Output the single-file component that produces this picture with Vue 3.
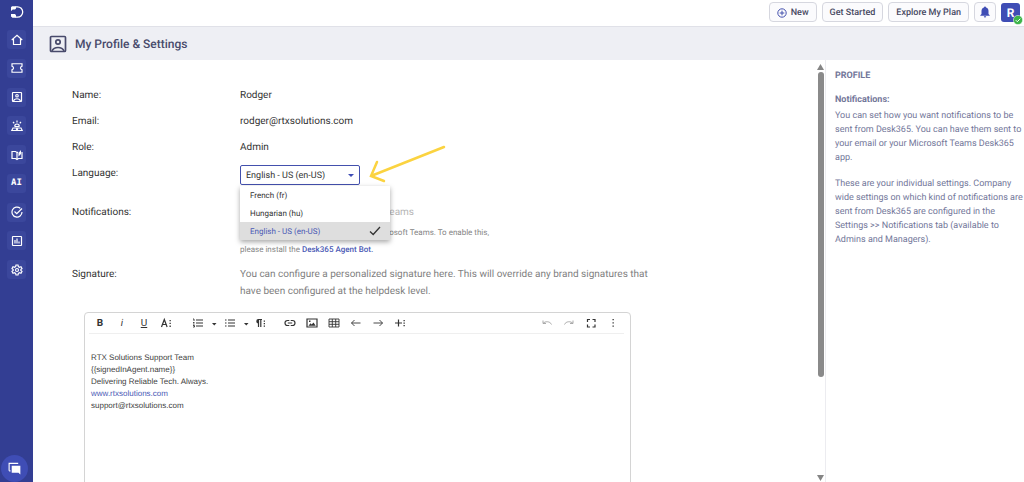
<script setup>
import { ref } from 'vue'

const languages = ['French (fr)', 'Hungarian (hu)', 'English - US (en-US)']
const language = ref('English - US (en-US)')

const navItems = ['Home', 'Tickets', 'Contacts', 'Dashboard', 'Knowledge base', 'AI', 'Tasks', 'Reports', 'Settings']
const details = [
  { label: 'Name:', value: 'Rodger' },
  { label: 'Email:', value: 'rodger@rtxsolutions.com' },
  { label: 'Role:', value: 'Admin' },
]
</script>

<template>
  <div class="app">
    <nav class="sidebar" aria-label="Main">
      <svg class="logo" viewBox="0 0 14 14" aria-hidden="true">
        <path d="M5.500 1.800h2a5.200 5.200 0 0 1 0 10.400h-2" fill="none" stroke="#fff" stroke-width="1.300" />
        <path d="M2 1.200h4v2.300L5 4.600H2.800L1 6V2.200zM1 9h4l1 1.200v2.600H2.500L1 11.500z" fill="#fff" />
      </svg>
      <div class="nav-list">
        <button v-for="item in navItems" :key="item" class="nav-item" type="button" :aria-label="item">
          <span v-if="item === 'AI'" class="ai">AI</span>
          <svg v-else viewBox="0 0 24 24" fill="none" stroke="#fff" stroke-width="2.400">
            <path v-if="item === 'Home'" d="M1.500 12 12 2.500l10.500 9.500M5 10v11h14V10" />
            <path v-if="item === 'Tickets'" d="M2 3.500h20v5c-4 1-4 6 0 7v5H2v-5c4-1 4-6 0-7z" />
            <g v-if="item === 'Contacts'">
              <rect x="3" y="3" width="18" height="18" rx="1" />
              <circle cx="12" cy="9.500" r="2.500" />
              <path d="M5 20c2-6 12-6 14 0" />
            </g>
            <g v-if="item === 'Dashboard'">
              <path d="M12 1v4M4 4l2.500 2.500M20 4l-2.500 2.500M7.500 12.500a4.500 4.500 0 0 1 9 0" />
              <path d="M7 13h10M4 16h7v5H1.500zM20 16h-7v5h9.500z" />
            </g>
            <g v-if="item === 'Knowledge base'">
              <path d="M12 20V7L9 5H2v14h7l3 2 3-2h7V6M12 8l2-2" />
              <path d="M15 15V8l5-6v8z" fill="#fff" stroke="none" />
            </g>
            <path v-if="item === 'Tasks'" d="M18.500 4.500A10 10 0 1 0 22 12M7 11l4.500 4.500L22 5" />
            <g v-if="item === 'Reports'">
              <rect x="3" y="3" width="18" height="18" rx="1" />
              <path d="M8 10v7M12 7v10M16 13v4" />
            </g>
            <g v-if="item === 'Settings'">
              <path d="M10 2h4l.7 3.200 2.300 1.300 3-1 2 3.500-2.300 2v2l2.300 2-2 3.500-3-1-2.300 1.300L14 22h-4l-.7-3.200L7 17.500l-3 1L2 15l2.300-2v-2L2 9l2-3.500 3 1 2.300-1.300z" />
              <circle cx="12" cy="12" r="3" />
            </g>
          </svg>
        </button>
      </div>
      <button class="chat" type="button" aria-label="Chat">
        <svg viewBox="0 0 14 14" aria-hidden="true">
          <path d="M1.200 9.500v-8h9.800" fill="none" stroke="#fff" stroke-width="1.200" />
          <path d="M1.200 9.500h1.500" stroke="#fff" stroke-width="1.200" />
          <path d="M4 4h9.300v9.500l-2-2H4z" fill="#fff" />
        </svg>
      </button>
    </nav>

    <div class="body">
      <header class="topbar">
        <button class="btn" type="button">
          <svg class="plus" viewBox="0 0 10 10" fill="none" stroke="#4350ad" aria-hidden="true">
            <circle cx="5" cy="5" r="4.200" />
            <path d="M5 2.700v4.600M2.700 5h4.600" />
          </svg>
          New
        </button>
        <button class="btn" type="button">Get Started</button>
        <button class="btn" type="button">Explore My Plan</button>
        <button class="btn bell" type="button" aria-label="Alerts">
          <svg viewBox="0 0 10 12" fill="#3f4db5" aria-hidden="true">
            <path d="M5 .5a1 1 0 0 1 1 1C8 2 8.500 3.500 8.500 5v3L9.700 9.300v.5H.3v-.5L1.500 8V5C1.500 3.500 2 2 4 1.500a1 1 0 0 1 1-1zM3.800 10.300h2.400a1.200 1.200 0 0 1-2.400 0z" />
          </svg>
        </button>
        <button class="avatar" type="button">
          R
          <svg class="status" viewBox="0 0 10 10" aria-hidden="true">
            <circle cx="5" cy="5" r="4.600" fill="#3db54a" stroke="#fff" stroke-width=".5" />
            <path d="M2.800 5.200l1.500 1.500 3-3" fill="none" stroke="#fff" />
          </svg>
        </button>
      </header>

      <div class="heading">
        <svg viewBox="0 0 18 18" fill="none" stroke="#484a6b" stroke-width="1.700" aria-hidden="true">
          <rect x="1.500" y="1.500" width="15" height="15" rx="1" />
          <circle cx="9" cy="7" r="2.200" />
          <path d="M3 16c2-4.700 10-4.700 12 0" />
        </svg>
        <h1>My Profile &amp; Settings</h1>
      </div>

      <div class="content">
        <main class="main">
          <dl class="details">
            <div v-for="row in details" :key="row.label" class="row">
              <dt>{{ row.label }}</dt>
              <dd>{{ row.value }}</dd>
            </div>
          </dl>
          <div class="row language-row">
            <label for="language">Language:</label>
            <div class="picker">
              <select id="language" v-model="language">
                <option v-for="name in languages" :key="name">{{ name }}</option>
              </select>
              <svg class="caret" viewBox="0 0 6 3" aria-hidden="true"><path d="M0 0h6L3 3z" fill="#3f4db5" /></svg>
              <div class="menu" role="listbox" aria-label="Language">
                <button
                  v-for="name in languages"
                  :key="name"
                  type="button"
                  role="option"
                  class="option"
                  :class="{ selected: name === language }"
                  :aria-selected="name === language"
                  @click="language = name"
                >
                  {{ name }}
                  <svg v-if="name === language" viewBox="0 0 12 10" aria-hidden="true">
                    <path d="M1 5.500l3.200 3L11 1" fill="none" stroke="#333" stroke-width="1.300" />
                  </svg>
                </button>
              </div>
              <svg class="pointer" viewBox="0 0 80 40" fill="none" stroke="#fbd340" stroke-width="2.500" stroke-linecap="round" aria-hidden="true">
                <path d="M76 3 3 32M9 18 3 32l13 5" />
              </svg>
            </div>
          </div>
          <div class="row notifications">
            <div>Notifications:</div>
            <div class="notify">
              <p class="channel">Teams</p>
              <p class="hint">
                <span class="hint-line">osoft Teams. To enable this,</span>
                please install the <a href="#">Desk365 Agent Bot.</a>
              </p>
            </div>
          </div>
          <div class="row signature">
            <div>Signature:</div>
            <p>You can configure a personalized signature here. This will override any brand signatures that have been configured at the helpdesk level.</p>
          </div>

          <section class="editor" aria-label="Signature editor">
            <div class="toolbar">
              <button type="button" class="tool strong">B</button>
              <button type="button" class="tool italic">i</button>
              <button type="button" class="tool under">U</button>
              <button type="button" class="tool last" aria-label="More text">
                <svg viewBox="0 0 12 12"><path d="M1.500 10 4.300 2.500 7.100 10M2.500 7.500h3.600" /><path class="dots" d="M9.500 3h1.300v1.300H9.500zM9.500 5.800h1.300v1.300H9.500zM9.500 8.600h1.300v1.300H9.500z" /></svg>
              </button>
              <button type="button" class="tool narrow" aria-label="Ordered list">
                <svg viewBox="0 0 12 12"><path d="M4 3h7M4 6h7M4 9h7" /><path class="thin" d="M1 2h1v2M1 5.500h1.500M1 7h1.500M1 8.500h1.500v1.500H1" /></svg>
              </button>
              <button type="button" class="tool arrow" aria-label="Ordered list style"><svg viewBox="0 0 12 12"><path class="dots" d="M4 6h4.500L6.250 8.500z" /></svg></button>
              <button type="button" class="tool narrow" aria-label="Bullet list">
                <svg viewBox="0 0 12 12"><path d="M4 3h7M4 6h7M4 9h7M1 3h1.500M1 6h1.500M1 9h1.500" /></svg>
              </button>
              <button type="button" class="tool arrow" aria-label="Bullet list style"><svg viewBox="0 0 12 12"><path class="dots" d="M4 6h4.500L6.250 8.500z" /></svg></button>
              <button type="button" class="tool last para" aria-label="Paragraph">
                <svg viewBox="0 0 12 12"><path d="M4.500 10V2.500H8M6.800 10V2.500" /><path class="dots" d="M4.500 2a2.200 2.200 0 0 0 0 4.500zM9.700 3.500H11v1.300H9.700zM9.700 6H11v1.300H9.700zM9.700 8.500H11v1.300H9.700z" /></svg>
              </button>
              <button type="button" class="tool" aria-label="Link">
                <svg viewBox="0 0 12 12"><path d="M5.300 3.500H3.500a2.500 2.500 0 0 0 0 5h1.800M6.700 3.500h1.800a2.500 2.500 0 0 1 0 5H6.700M3.800 6h4.400" /></svg>
              </button>
              <button type="button" class="tool" aria-label="Image">
                <svg viewBox="0 0 12 12"><path d="M1 2h10v8H1z" /><path class="dots" d="M2.500 8.800l2-2.500 1.200 1.300L7.500 5.500l2.200 3.300zM3 3.500h1.500V5H3z" /></svg>
              </button>
              <button type="button" class="tool" aria-label="Table">
                <svg viewBox="0 0 12 12"><path class="thin" d="M1 2h10v8H1zM1 4.700h10M1 7.300h10M4.300 2v8M7.700 2v8" /></svg>
              </button>
              <button type="button" class="tool" aria-label="Outdent"><svg viewBox="0 0 12 12"><path class="thin" d="M10.500 6h-9M4.500 3l-3 3 3 3" /></svg></button>
              <button type="button" class="tool" aria-label="Indent"><svg viewBox="0 0 12 12"><path class="thin" d="M1.500 6h9M7.500 3l3 3-3 3" /></svg></button>
              <button type="button" class="tool" aria-label="Insert more">
                <svg viewBox="0 0 12 12"><path d="M1 6h7M4.500 2.500v7" /><path class="dots" d="M9.500 3h1.300v1.300H9.500zM9.500 5.500h1.300v1.300H9.500zM9.500 8h1.300v1.300H9.500z" /></svg>
              </button>
              <span class="spacer"></span>
              <button type="button" class="tool" disabled aria-label="Undo"><svg viewBox="0 0 12 12"><path class="thin" d="M2 3.500v3h3M2 6.500C4 4 9 4 10.500 7.500" /></svg></button>
              <button type="button" class="tool" disabled aria-label="Redo"><svg viewBox="0 0 12 12"><path class="thin" d="M10 3.500v3H7M10 6.500C8 4 3 4 1.500 7.500" /></svg></button>
              <button type="button" class="tool" aria-label="Full screen"><svg viewBox="0 0 12 12"><path d="M2.500 5V2.500H5M7.500 2.500H10V5M10 7.500V10H7.500M5 10H2.500V7.500" /></svg></button>
              <button type="button" class="tool" aria-label="More"><svg viewBox="0 0 12 12"><path class="dots" d="M5.500 2h1.300v1.300H5.500zM5.500 5.200h1.300v1.300H5.500zM5.500 8.400h1.300v1.300H5.500z" /></svg></button>
            </div>
            <div class="document" contenteditable="true">
              <div>RTX Solutions Support Team</div>
              <div v-pre>{{signedInAgent.name}}</div>
              <div>Delivering Reliable Tech. Always.</div>
              <div><a href="#">www.rtxsolutions.com</a></div>
              <div>support@rtxsolutions.com</div>
            </div>
          </section>
        </main>

        <div class="scrollbar" aria-hidden="true">
          <svg viewBox="0 0 7 6"><path d="M3.500 0 7 6H0z" /></svg>
          <div class="track"><div class="thumb"></div></div>
          <svg viewBox="0 0 7 6"><path d="M0 0h7L3.500 6z" /></svg>
        </div>

        <aside class="help">
          <h2>PROFILE</h2>
          <h3>Notifications:</h3>
          <p>You can set how you want notifications to be sent from Desk365. You can have them sent to your email or your Microsoft Teams Desk365 app.</p>
          <p>These are your individual settings. Company wide settings on which kind of notifications are sent from Desk365 are configured in the Settings &gt;&gt; Notifications tab (available to Admins and Managers).</p>
        </aside>
      </div>
    </div>
  </div>
</template>

<style>
body {
  margin: 0;
  background: #fff;
}
</style>

<style scoped>
* {
  box-sizing: border-box;
}
button,
select {
  font-family: inherit;
  text-rendering: inherit;
  margin: 0;
  padding: 0;
  border: 0;
  background: none;
}
h1, h2, h3, p, dl, dd {
  margin: 0;
}
svg {
  display: block;
}
a {
  color: #4a59b5;
  text-decoration: none;
}
.app {
  display: flex;
  height: 100vh;
  overflow: hidden;
  font-family: Roboto, sans-serif;
  font-size: 10px;
  text-rendering: geometricPrecision;
  color: #333;
}
.sidebar {
  flex: none;
  display: flex;
  flex-direction: column;
  align-items: center;
  width: 33px;
  padding-top: 5px;
  background: #333e93;
}
.logo {
  width: 14px;
  height: 14px;
}
.nav-list {
  display: flex;
  flex-direction: column;
  justify-content: space-between;
  height: 249px;
  margin-top: 11px;
}
.nav-item {
  display: flex;
  align-items: center;
  justify-content: center;
  width: 19px;
  height: 19px;
  border-radius: 3px;
  background: #3b479c;
}
.nav-item svg {
  width: 12px;
  height: 12px;
}
.ai {
  font: bold 9px "DejaVu Sans Mono", monospace;
  color: #fff;
}
.chat {
  display: flex;
  align-items: center;
  justify-content: center;
  width: 27px;
  height: 27px;
  margin: auto 4px 0 0;
  border-radius: 50%;
  background: #3f4db5;
}
.chat svg {
  width: 13px;
  height: 13px;
}
.body {
  flex: 1;
  display: flex;
  flex-direction: column;
  min-width: 0;
}
.topbar {
  flex: none;
  display: flex;
  justify-content: flex-end;
  gap: 5px;
  height: 26px;
  padding: 2px 4px 0 0;
}
.btn {
  display: flex;
  align-items: center;
  gap: 4px;
  height: 20px;
  padding: 1px 7px 0;
  border: 1px solid #d6d7df;
  border-radius: 4px;
  background: #fbfbfd;
  font-size: 9px;
  font-weight: 500;
  color: #484a63;
}
.plus {
  width: 10px;
  height: 10px;
}
.bell {
  padding: 0 5px;
}
.bell svg {
  width: 10px;
  height: 12px;
}
.avatar {
  position: relative;
  width: 19px;
  height: 19px;
  margin-top: 1px;
  border-radius: 3px;
  background: #3f4db5;
  font-size: 12px;
  font-weight: 700;
  color: #fff;
}
.status {
  position: absolute;
  right: -3px;
  bottom: -3px;
  width: 10px;
  height: 10px;
}
.heading {
  flex: none;
  display: flex;
  align-items: center;
  gap: 8px;
  height: 34px;
  padding-left: 16px;
  border-top: 1px solid #e0e1e8;
  background: #eeeff4;
}
.heading svg {
  width: 18px;
  height: 18px;
}
.heading h1 {
  font-size: 12px;
  font-weight: 500;
  color: #484a6b;
}
.content {
  flex: 1;
  display: flex;
  min-height: 0;
}
.main {
  flex: 1;
  display: flex;
  flex-direction: column;
  min-width: 0;
  padding: 23px 0 0 39px;
}
.row {
  flex: none;
  display: grid;
  grid-template-columns: 168px 1fr;
  min-height: 26px;
  line-height: 26px;
}
.language-row {
  min-height: 39px;
}
.picker {
  position: relative;
  width: 120px;
  height: 20px;
  margin-top: 4px;
}
.picker select {
  display: block;
  width: 100%;
  height: 20px;
  padding: 1px 5px 0;
  appearance: none;
  border: 1px solid #4350ad;
  border-radius: 2px;
  background: #fff;
  font-size: 9px;
  color: #333;
}
.caret {
  position: absolute;
  top: 9px;
  right: 6px;
  width: 6px;
  height: 3px;
}
.menu {
  position: absolute;
  z-index: 2;
  top: 21px;
  left: 0;
  width: 150px;
  background: #fff;
  box-shadow: 0 2px 5px rgba(0, 0, 0, 0.35);
}
.option {
  display: flex;
  align-items: center;
  justify-content: space-between;
  width: 100%;
  height: 18px;
  padding: 0 9px 0 10px;
  font-size: 8px;
  color: #333;
}
.option.selected {
  background: #dedede;
  color: #4a59b5;
}
.option svg {
  width: 12px;
  height: 10px;
}
.pointer {
  position: absolute;
  z-index: 3;
  top: -21px;
  left: 128px;
  width: 80px;
  height: 40px;
}
.notifications {
  min-height: 62px;
}
.notify {
  color: #858585;
}
.channel {
  width: 174px;
  text-align: right;
  color: #b5b5b5;
}
.hint {
  margin-top: -2px;
  font-size: 8px;
  line-height: 17px;
}
.hint-line {
  display: block;
  width: 249px;
  text-align: right;
}
.hint a {
  font-weight: 500;
}
.signature {
  line-height: 17px;
  min-height: 34px;
  margin-top: 4px;
}
.signature p {
  max-width: 410px;
  color: #808080;
}
.editor {
  flex: 1 0 240px;
  margin: 12px 185px 0 12px;
  border: 1px solid #d4d4d4;
  border-radius: 4px;
}
.toolbar {
  display: flex;
  align-items: center;
  height: 21px;
  margin: 0 6px 0 4px;
  border-bottom: 1px solid #efefef;
}
.tool {
  display: flex;
  align-items: center;
  justify-content: center;
  width: 22px;
  height: 20px;
  font-size: 10px;
  color: #333;
}
.tool svg {
  flex: none;
  width: 12px;
  height: 12px;
  fill: none;
  stroke: #333;
  stroke-width: 1.2;
}
.tool .thin {
  stroke-width: 0.9;
}
.tool .dots {
  fill: #333;
  stroke: none;
}
.tool:disabled {
  opacity: 0.45;
}
.strong {
  font-weight: 700;
}
.italic {
  font-style: italic;
}
.under {
  text-decoration: underline;
}
.narrow {
  width: 20px;
}
.arrow {
  width: 12px;
}
.last {
  margin-right: 11px;
}
.para {
  width: 16px;
}
.spacer {
  flex: 1;
}
.document {
  padding: 18px 6px 0;
  outline: 0;
  font: 8px/12px "Liberation Sans", Arial, sans-serif;
  color: #414141;
}
.scrollbar {
  flex: none;
  display: flex;
  flex-direction: column;
  align-items: center;
  gap: 2px;
  width: 9px;
  padding: 4px 0 1px;
}
.scrollbar svg {
  width: 7px;
  height: 6px;
  fill: #858585;
}
.track {
  flex: 1;
}
.thumb {
  width: 6px;
  height: 76%;
  border-radius: 3px;
  background: #8a8a8a;
}
.help {
  flex: none;
  width: 199px;
  padding: 10px 0 0 9px;
  border-left: 1px solid #ececf0;
  color: #73779a;
}
.help h2 {
  font-size: 9px;
  line-height: 13px;
  font-weight: 700;
}
.help h3 {
  margin: 11px 0 2px;
  font-size: 9px;
  line-height: 13px;
  font-weight: 700;
}
.help p {
  margin-bottom: 12px;
  font-size: 9px;
  line-height: 14px;
}
</style>
